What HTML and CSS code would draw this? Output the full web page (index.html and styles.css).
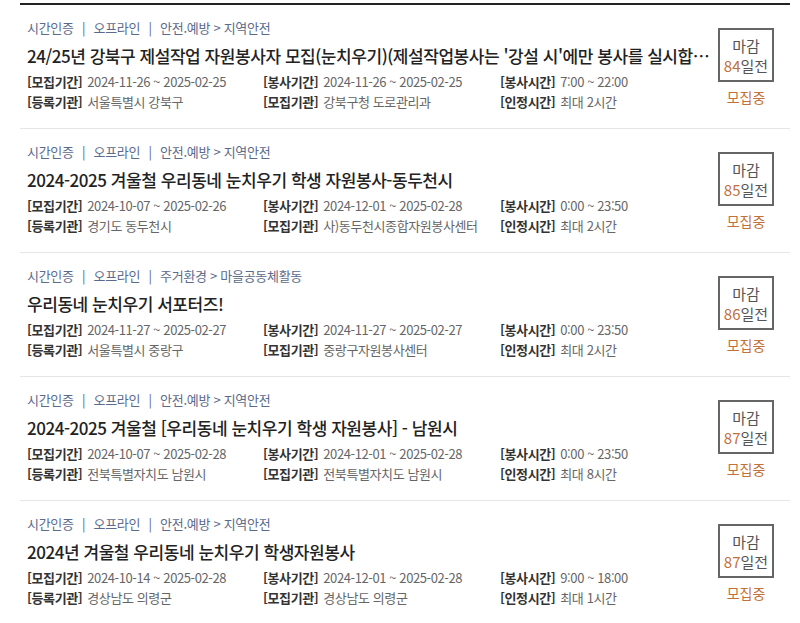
FILE: index.html
```html
<!DOCTYPE html>
<html lang="ko">
<head>
  <meta charset="UTF-8">
  <title>봉사활동 목록</title>
  <link rel="stylesheet" href="styles.css">
</head>
<body>
  <ul class="list">
    <li class="item">
      <div class="info">
        <p class="cate">시간인증 <span class="bar">|</span> 오프라인 <span class="bar">|</span> 안전.예방 &gt; 지역안전</p>
        <p class="title">24/25년 강북구 제설작업 자원봉사자 모집(눈치우기)(제설작업봉사는 '강설 시'에만 봉사를 실시합니다)</p>
        <dl class="meta">
          <div><dt>[모집기간]</dt><dd>2024-11-26 ~ 2025-02-25</dd></div>
          <div><dt>[봉사기간]</dt><dd>2024-11-26 ~ 2025-02-25</dd></div>
          <div><dt>[봉사시간]</dt><dd>7:00 ~ 22:00</dd></div>
          <div><dt>[등록기관]</dt><dd>서울특별시 강북구</dd></div>
          <div><dt>[모집기관]</dt><dd>강북구청 도로관리과</dd></div>
          <div><dt>[인정시간]</dt><dd>최대 2시간</dd></div>
        </dl>
      </div>
      <div class="state">
        <div class="dday">마감<br><em>84</em>일전</div>
        <span class="status">모집중</span>
      </div>
    </li>
    <li class="item">
      <div class="info">
        <p class="cate">시간인증 <span class="bar">|</span> 오프라인 <span class="bar">|</span> 안전.예방 &gt; 지역안전</p>
        <p class="title">2024-2025 겨울철 우리동네 눈치우기 학생 자원봉사-동두천시</p>
        <dl class="meta">
          <div><dt>[모집기간]</dt><dd>2024-10-07 ~ 2025-02-26</dd></div>
          <div><dt>[봉사기간]</dt><dd>2024-12-01 ~ 2025-02-28</dd></div>
          <div><dt>[봉사시간]</dt><dd>0:00 ~ 23:50</dd></div>
          <div><dt>[등록기관]</dt><dd>경기도 동두천시</dd></div>
          <div><dt>[모집기관]</dt><dd>사)동두천시종합자원봉사센터</dd></div>
          <div><dt>[인정시간]</dt><dd>최대 2시간</dd></div>
        </dl>
      </div>
      <div class="state">
        <div class="dday">마감<br><em>85</em>일전</div>
        <span class="status">모집중</span>
      </div>
    </li>
    <li class="item">
      <div class="info">
        <p class="cate">시간인증 <span class="bar">|</span> 오프라인 <span class="bar">|</span> 주거환경 &gt; 마을공동체활동</p>
        <p class="title">우리동네 눈치우기 서포터즈!</p>
        <dl class="meta">
          <div><dt>[모집기간]</dt><dd>2024-11-27 ~ 2025-02-27</dd></div>
          <div><dt>[봉사기간]</dt><dd>2024-11-27 ~ 2025-02-27</dd></div>
          <div><dt>[봉사시간]</dt><dd>0:00 ~ 23:50</dd></div>
          <div><dt>[등록기관]</dt><dd>서울특별시 중랑구</dd></div>
          <div><dt>[모집기관]</dt><dd>중랑구자원봉사센터</dd></div>
          <div><dt>[인정시간]</dt><dd>최대 2시간</dd></div>
        </dl>
      </div>
      <div class="state">
        <div class="dday">마감<br><em>86</em>일전</div>
        <span class="status">모집중</span>
      </div>
    </li>
    <li class="item">
      <div class="info">
        <p class="cate">시간인증 <span class="bar">|</span> 오프라인 <span class="bar">|</span> 안전.예방 &gt; 지역안전</p>
        <p class="title">2024-2025 겨울철 [우리동네 눈치우기 학생 자원봉사] - 남원시</p>
        <dl class="meta">
          <div><dt>[모집기간]</dt><dd>2024-10-07 ~ 2025-02-28</dd></div>
          <div><dt>[봉사기간]</dt><dd>2024-12-01 ~ 2025-02-28</dd></div>
          <div><dt>[봉사시간]</dt><dd>0:00 ~ 23:50</dd></div>
          <div><dt>[등록기관]</dt><dd>전북특별자치도 남원시</dd></div>
          <div><dt>[모집기관]</dt><dd>전북특별자치도 남원시</dd></div>
          <div><dt>[인정시간]</dt><dd>최대 8시간</dd></div>
        </dl>
      </div>
      <div class="state">
        <div class="dday">마감<br><em>87</em>일전</div>
        <span class="status">모집중</span>
      </div>
    </li>
    <li class="item">
      <div class="info">
        <p class="cate">시간인증 <span class="bar">|</span> 오프라인 <span class="bar">|</span> 안전.예방 &gt; 지역안전</p>
        <p class="title">2024년 겨울철 우리동네 눈치우기 학생자원봉사</p>
        <dl class="meta">
          <div><dt>[모집기간]</dt><dd>2024-10-14 ~ 2025-02-28</dd></div>
          <div><dt>[봉사기간]</dt><dd>2024-12-01 ~ 2025-02-28</dd></div>
          <div><dt>[봉사시간]</dt><dd>9:00 ~ 18:00</dd></div>
          <div><dt>[등록기관]</dt><dd>경상남도 의령군</dd></div>
          <div><dt>[모집기관]</dt><dd>경상남도 의령군</dd></div>
          <div><dt>[인정시간]</dt><dd>최대 1시간</dd></div>
        </dl>
      </div>
      <div class="state">
        <div class="dday">마감<br><em>87</em>일전</div>
        <span class="status">모집중</span>
      </div>
    </li>
  </ul>
</body>
</html>
```

FILE: styles.css
```css
body {
  margin: 0;
  background-color: #ffffff;
  font-family: "Noto Sans CJK KR", "Noto Sans", sans-serif;
  color: #333;
}
.list {
  list-style: none;
  margin: 3px 10px 0 20px;
  padding: 0;
  border-top: 2px solid #222;
}
.item {
  display: flex;
  align-items: center;
  border-bottom: 1px solid #e6e6e6;
  padding: 13px 0 16px 7px;
}
.info {
  flex: 1;
  min-width: 0;
}
.cate {
  margin: 0;
  font-size: 13px;
  line-height: 20px;
  letter-spacing: -0.3px;
  color: #5b6b8c;
}
.cate .bar {
  margin: 0 5px;
}
.title {
  margin: 5px 0 3px;
  font-size: 17px;
  font-weight: 500;
  line-height: 26px;
  color: #222;
  white-space: nowrap;
  overflow: hidden;
  text-overflow: ellipsis;
  letter-spacing: -0.45px;
}
.meta {
  display: grid;
  grid-template-columns: 236px 237px 1fr;
  margin: 0;
  font-size: 13px;
  line-height: 20px;
  letter-spacing: -0.4px;
}
.meta div {
  display: flex;
  gap: 5px;
  white-space: nowrap;
}
.meta dt {
  font-weight: bold;
  color: #333;
}
.meta dd {
  margin: 0;
  color: #666;
}
.state {
  display: flex;
  flex-direction: column;
  align-items: center;
  width: 56px;
  margin: 4px 16px 0 4px;
}
.dday {
  box-sizing: border-box;
  width: 56px;
  height: 54px;
  border: 2px solid #666;
  padding-top: 6px;
  text-align: center;
  font-size: 15px;
  line-height: 20px;
  color: #555;
}
.dday em {
  font-style: normal;
  color: #c2703c;
}
.status {
  margin-top: 5px;
  font-size: 14px;
  line-height: 20px;
  color: #c2703c;
}
```
